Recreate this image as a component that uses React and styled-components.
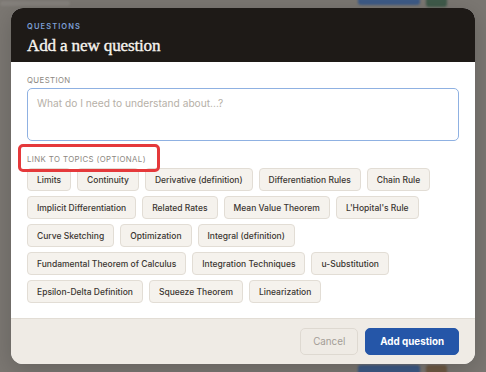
import React from "react";
import styled, { createGlobalStyle } from "styled-components";

const Global = createGlobalStyle`
  html, body { margin: 0; padding: 0; }
  body {
    width: 486px;
    height: 372px;
    overflow: hidden;
    background: #7b7772;
    font-family: Inter, "Noto Sans", sans-serif;
  }
  #root { height: 100%; }
`;

const Backdrop = styled.div`
  position: relative;
  width: 486px;
  height: 372px;
  display: flex;
  align-items: center;
  justify-content: center;
  overflow: hidden;
`;

const Ghost = styled.div`
  position: absolute;
  left: ${(p) => p.$x}px;
  top: ${(p) => p.$y}px;
  width: ${(p) => p.$w}px;
  height: ${(p) => p.$h}px;
  background: ${(p) => p.$c};
  border-radius: 3px;
  filter: blur(1px);
`;

const Modal = styled.div`
  position: relative;
  width: 464px;
  height: 356px;
  background: #ffffff;
  border-radius: 12px;
  overflow: hidden;
  display: flex;
  flex-direction: column;
  box-shadow: 0 6px 24px rgba(0, 0, 0, 0.18);
`;

const Header = styled.div`
  background: #1e1a17;
  height: 54px;
  box-sizing: border-box;
  padding: 14px 16px 0;
  display: flex;
  flex-direction: column;
`;

const Eyebrow = styled.div`
  font-size: 7.5px;
  letter-spacing: 1.1px;
  font-weight: 600;
  color: #7c9fd4;
  line-height: 10px;
`;

const Title = styled.h2`
  margin: 3px 0 0;
  font-family: "Liberation Serif", "DejaVu Serif", serif;
  font-weight: 400;
  font-size: 17.2px;
  letter-spacing: -0.2px;
  line-height: 22px;
  color: #f7f4ef;
  -webkit-text-stroke: 0.35px #f7f4ef;
`;

const Body = styled.div`
  flex: 1;
  padding: 13px 16px 0;
  display: flex;
  flex-direction: column;
`;

const FieldLabel = styled.div`
  font-size: 7.8px;
  letter-spacing: 0.4px;
  color: #8c8781;
  line-height: 10px;
  margin-bottom: ${(p) => p.$gap}px;
`;

const TextArea = styled.textarea`
  box-sizing: border-box;
  width: 432px;
  height: 53px;
  resize: none;
  border: 1px solid #8fb1e2;
  border-radius: 5px;
  padding: 8px 9px;
  font-family: Inter, "Noto Sans", sans-serif;
  font-size: 10.2px;
  color: #3a3530;
  outline: none;
  &::placeholder { color: #b6b0a7; }
`;

const TopicsHead = styled.div`
  position: relative;
  margin-top: 13px;
`;

const Annotation = styled.div`
  position: absolute;
  left: -9px;
  top: -10px;
  width: 142px;
  height: 28px;
  box-sizing: border-box;
  border: 3px solid #e5393b;
  border-radius: 5px;
`;

const Chips = styled.div`
  display: flex;
  flex-wrap: wrap;
  gap: 5px 6px;
  width: 432px;
`;

const Chip = styled.button`
  height: 23px;
  box-sizing: border-box;
  padding: 0 9px;
  background: #f5f2ed;
  border: 1px solid #e2ddd5;
  border-radius: 4px;
  font-family: Inter, "Noto Sans", sans-serif;
  font-size: 8.5px;
  font-weight: 500;
  color: #3b3631;
  cursor: pointer;
`;

const Footer = styled.div`
  height: 46px;
  box-sizing: border-box;
  background: #efebe5;
  border-top: 1px solid #e2ddd5;
  display: flex;
  justify-content: flex-end;
  align-items: center;
  gap: 7px;
  padding: 0 16px;
`;

const Button = styled.button`
  height: 27px;
  box-sizing: border-box;
  border-radius: 5px;
  font-family: Inter, "Noto Sans", sans-serif;
  font-size: 9.8px;
  padding: 0 ${(p) => (p.$primary ? 14 : 12)}px;
  font-weight: ${(p) => (p.$primary ? 700 : 400)};
  color: ${(p) => (p.$primary ? "#ffffff" : "#a39d96")};
  background: ${(p) => (p.$primary ? "#2556a8" : "transparent")};
  border: 1px solid ${(p) => (p.$primary ? "#2556a8" : "#ded9d1")};
`;

const topics = [
  "Limits",
  "Continuity",
  "Derivative (definition)",
  "Differentiation Rules",
  "Chain Rule",
  "Implicit Differentiation",
  "Related Rates",
  "Mean Value Theorem",
  "L'Hopital's Rule",
  "Curve Sketching",
  "Optimization",
  "Integral (definition)",
  "Fundamental Theorem of Calculus",
  "Integration Techniques",
  "u-Substitution",
  "Epsilon-Delta Definition",
  "Squeeze Theorem",
  "Linearization",
];

export default function App() {
  return (
    <>
      <Global />
      <Backdrop>
        <Ghost $x={358} $y={-4} $w={62} $h={9} $c="#3d5a86" />
        <Ghost $x={426} $y={-4} $w={21} $h={11} $c="#3f5a4a" />
        <Ghost $x={358} $y={365} $w={62} $h={12} $c="#3d5a86" />
        <Ghost $x={426} $y={365} $w={21} $h={12} $c="#6e5a44" />
        <Ghost $x={0} $y={1} $w={70} $h={5} $c="#85817c" />
        <Modal>
          <Header>
            <Eyebrow>QUESTIONS</Eyebrow>
            <Title>Add a new question</Title>
          </Header>
          <Body>
            <FieldLabel $gap={3}>QUESTION</FieldLabel>
            <TextArea placeholder="What do I need to understand about...?" />
            <TopicsHead>
              <FieldLabel $gap={4}>LINK TO TOPICS (OPTIONAL)</FieldLabel>
              <Annotation />
            </TopicsHead>
            <Chips>
              {topics.map((t) => (
                <Chip key={t}>{t}</Chip>
              ))}
            </Chips>
          </Body>
          <Footer>
            <Button disabled>Cancel</Button>
            <Button $primary>Add question</Button>
          </Footer>
        </Modal>
      </Backdrop>
    </>
  );
}
